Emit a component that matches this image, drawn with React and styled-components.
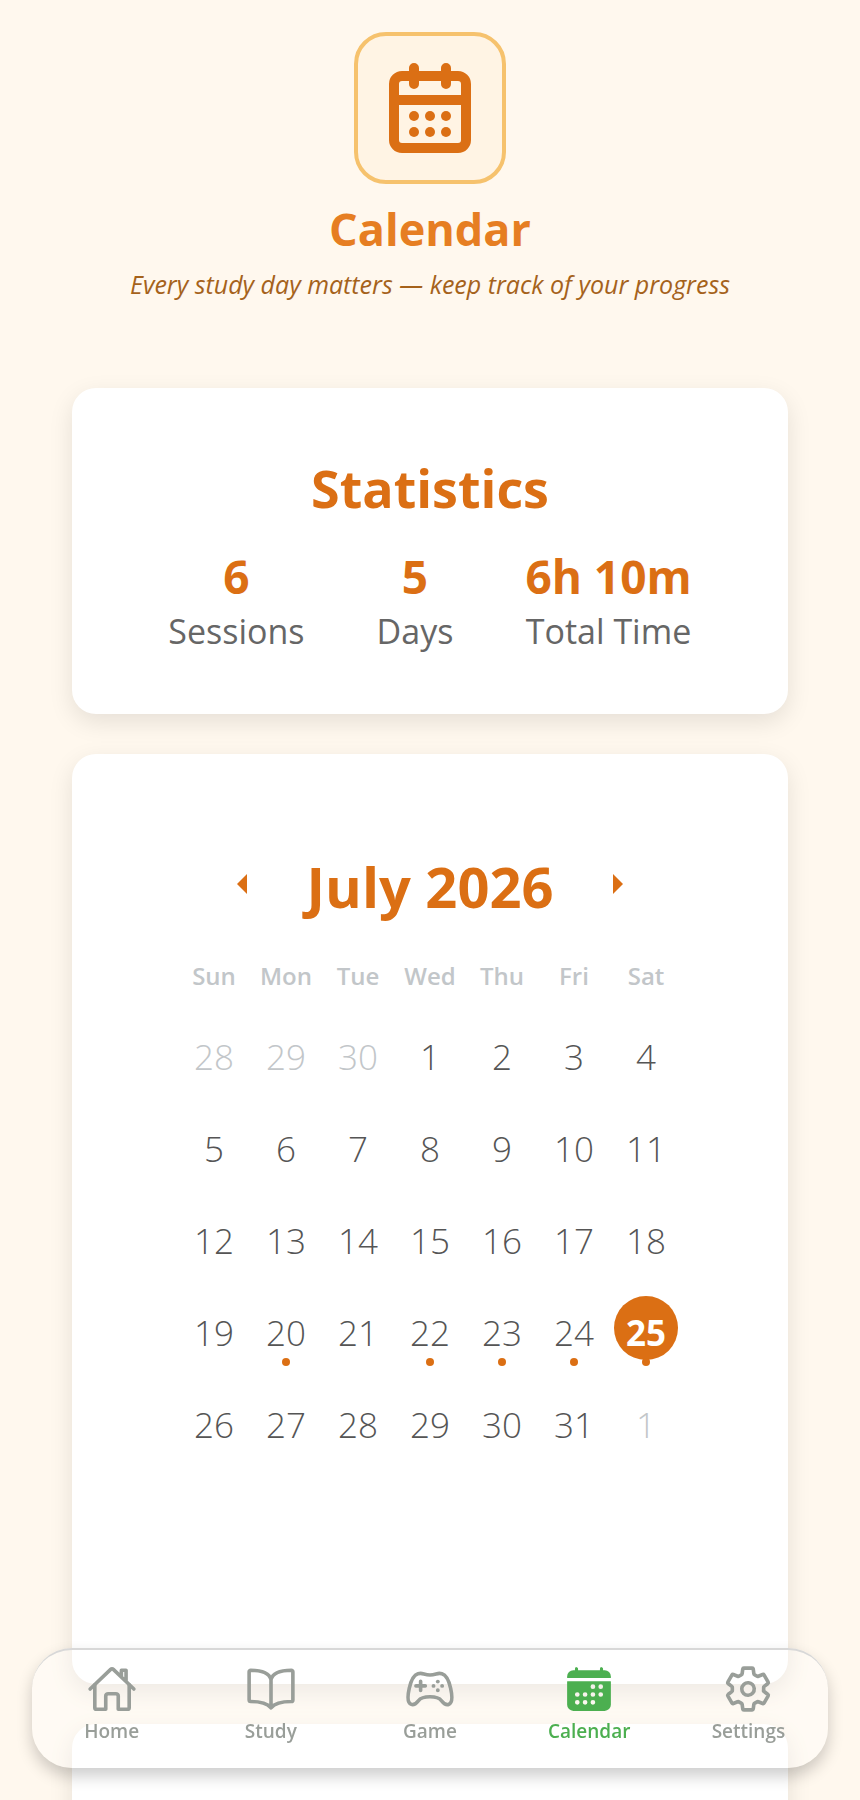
import styled, { createGlobalStyle } from "styled-components";
import {
  IoBookOutline,
  IoCalendar,
  IoGameControllerOutline,
  IoHomeOutline,
  IoSettingsOutline,
} from "react-icons/io5";

const GlobalStyle = createGlobalStyle`
  * {
    box-sizing: border-box;
  }
  body {
    margin: 0;
    background-color: #fff8ee;
    font-family: "Open Sans", "Noto Sans", sans-serif;
    color: #666;
  }
`;

const Page = styled.main`
  height: 100vh;
  overflow: hidden;
  padding: 32px 72px 0;
`;

const Header = styled.header`
  display: flex;
  flex-direction: column;
  align-items: center;
  margin-bottom: 86px;
`;

const Badge = styled.div`
  display: flex;
  align-items: center;
  justify-content: center;
  width: 152px;
  height: 152px;
  border: 4px solid #f6c26d;
  border-radius: 32px;
  background-color: #fff4e4;
`;

const PageTitle = styled.h1`
  margin: 15px 0 0;
  font-size: 45px;
  line-height: 60px;
  font-weight: 700;
  color: #e67e22;
`;

const Tagline = styled.p`
  margin: 7px 0 0;
  font-size: 25px;
  line-height: 36px;
  font-style: italic;
  color: #a5621b;
`;

const Card = styled.section`
  margin-bottom: 40px;
  padding: ${(props) => props.$padding || "64px 64px 56px"};
  border-radius: 24px;
  background-color: white;
  box-shadow: 0 8px 24px rgba(0, 0, 0, 0.1);
`;

const CardTitle = styled.h2`
  margin: 0;
  font-size: ${(props) => (props.$large ? "56px" : "52px")};
  line-height: 72px;
  font-weight: 700;
  text-align: center;
  color: #db6f14;
`;

const Stats = styled.div`
  display: flex;
  justify-content: center;
  gap: 72px;
  margin-top: 24px;
`;

const Stat = styled.div`
  display: flex;
  flex-direction: column;
  align-items: center;
`;

const StatValue = styled.strong`
  font-size: 46px;
  line-height: 56px;
  color: #db6f14;
`;

const StatLabel = styled.span`
  font-size: 34px;
  line-height: 54px;
`;

const MonthBar = styled.div`
  display: flex;
  align-items: center;
  justify-content: center;
  gap: 48px;
`;

const ArrowButton = styled.button`
  display: flex;
  padding: 0 4px 4px;
  border: none;
  background: none;
  cursor: pointer;
`;

const Month = styled.table`
  width: 504px;
  max-width: 100%;
  margin: 22px auto 0;
  border-collapse: collapse;
  table-layout: fixed;
`;

const Weekday = styled.th`
  height: 62px;
  padding: 0;
  font-size: 24px;
  font-weight: 600;
  color: #c2c6c9;
`;

const Cell = styled.td`
  height: 92px;
  padding: 0;
`;

const Day = styled.button`
  position: relative;
  display: flex;
  align-items: center;
  justify-content: center;
  width: 64px;
  height: 64px;
  margin: 0 auto;
  padding: 10px 0 0;
  border: none;
  border-radius: 50%;
  background-color: ${(props) => (props.$today ? "#db6f14" : "transparent")};
  font-family: inherit;
  font-size: 35px;
  line-height: 48px;
  font-weight: ${(props) => (props.$today ? 700 : 300)};
  color: ${(props) =>
    props.$today ? "white" : props.$outside ? "#c2c6c9" : "#555"};
  cursor: pointer;
`;

const Dot = styled.span`
  position: absolute;
  bottom: -6px;
  left: 50%;
  width: 8px;
  height: 8px;
  margin-left: -4px;
  border-radius: 50%;
  background-color: #db6f14;
`;

const NavBar = styled.nav`
  position: fixed;
  right: 32px;
  bottom: 32px;
  left: 32px;
  display: flex;
  height: 120px;
  border-top: 2px solid #d8d8d8;
  border-radius: 40px;
  background-color: rgba(255, 255, 255, 0.35);
  box-shadow: 0 8px 16px rgba(0, 0, 0, 0.2);
`;

const NavLink = styled.a`
  flex: 1;
  display: flex;
  flex-direction: column;
  align-items: center;
  padding-top: 14px;
  font-size: 19px;
  line-height: 26px;
  font-weight: 600;
  text-decoration: none;
  color: ${(props) => (props.$active ? "#4caf50" : "#999e99")};

  svg {
    width: 50px;
    height: 50px;
    margin-bottom: 4px;
  }

  path[fill="none"] {
    stroke-width: 37px;
  }
`;

const CalendarIcon = () => (
  <svg width="96" height="96" viewBox="0 0 96 96" aria-hidden="true">
    <g fill="none" stroke="#db6f14" strokeWidth="10">
      <rect x="12" y="16" width="72" height="72" rx="8" />
      <path d="M12 40H84" />
      <path d="M32 8V24M64 8V24" strokeLinecap="round" />
    </g>
    <g fill="#db6f14">
      {[56, 72].map((y) =>
        [32, 48, 64].map((x) => <circle key={x + "-" + y} cx={x} cy={y} r="5" />)
      )}
    </g>
  </svg>
);

const Arrow = ({ points }) => (
  <svg width="24" height="24" viewBox="0 0 24 24" aria-hidden="true">
    <polygon points={points} fill="#db6f14" />
  </svg>
);

const stats = [
  { value: "6", label: "Sessions" },
  { value: "5", label: "Days" },
  { value: "6h 10m", label: "Total Time" },
];

const weekdays = ["Sun", "Mon", "Tue", "Wed", "Thu", "Fri", "Sat"];

const weeks = [0, 1, 2, 3, 4].map((week) =>
  weekdays.map((_, i) => new Date(2026, 5, 28 + week * 7 + i))
);

const studied = [20, 22, 23, 24, 25];
const today = 25;

const links = [
  { label: "Home", Icon: IoHomeOutline },
  { label: "Study", Icon: IoBookOutline },
  { label: "Game", Icon: IoGameControllerOutline },
  { label: "Calendar", Icon: IoCalendar },
  { label: "Settings", Icon: IoSettingsOutline },
];

const App = () => {
  return (
    <>
      <GlobalStyle />
      <Page>
        <Header>
          <Badge>
            <CalendarIcon />
          </Badge>
          <PageTitle>Calendar</PageTitle>
          <Tagline>Every study day matters — keep track of your progress</Tagline>
        </Header>
        <Card>
          <CardTitle>Statistics</CardTitle>
          <Stats>
            {stats.map((item) => (
              <Stat key={item.label}>
                <StatValue>{item.value}</StatValue>
                <StatLabel>{item.label}</StatLabel>
              </Stat>
            ))}
          </Stats>
        </Card>
        <Card $padding="96px 64px 218px">
          <MonthBar>
            <ArrowButton aria-label="Previous month">
              <Arrow points="6,12 16,2 16,22" />
            </ArrowButton>
            <CardTitle $large>July 2026</CardTitle>
            <ArrowButton aria-label="Next month">
              <Arrow points="18,12 8,2 8,22" />
            </ArrowButton>
          </MonthBar>
          <Month>
            <thead>
              <tr>
                {weekdays.map((name) => (
                  <Weekday key={name}>{name}</Weekday>
                ))}
              </tr>
            </thead>
            <tbody>
              {weeks.map((week, row) => (
                <tr key={row}>
                  {week.map((date) => {
                    const day = date.getDate();
                    const inMonth = date.getMonth() === 6;
                    return (
                      <Cell key={day}>
                        <Day $outside={!inMonth} $today={inMonth && day === today}>
                          {day}
                          {inMonth && studied.includes(day) && <Dot />}
                        </Day>
                      </Cell>
                    );
                  })}
                </tr>
              ))}
            </tbody>
          </Month>
        </Card>
        <Card />
      </Page>
      <NavBar>
        {links.map(({ label, Icon }) => (
          <NavLink key={label} href="#" $active={label === "Calendar"}>
            <Icon />
            {label}
          </NavLink>
        ))}
      </NavBar>
    </>
  );
};

export default App;
